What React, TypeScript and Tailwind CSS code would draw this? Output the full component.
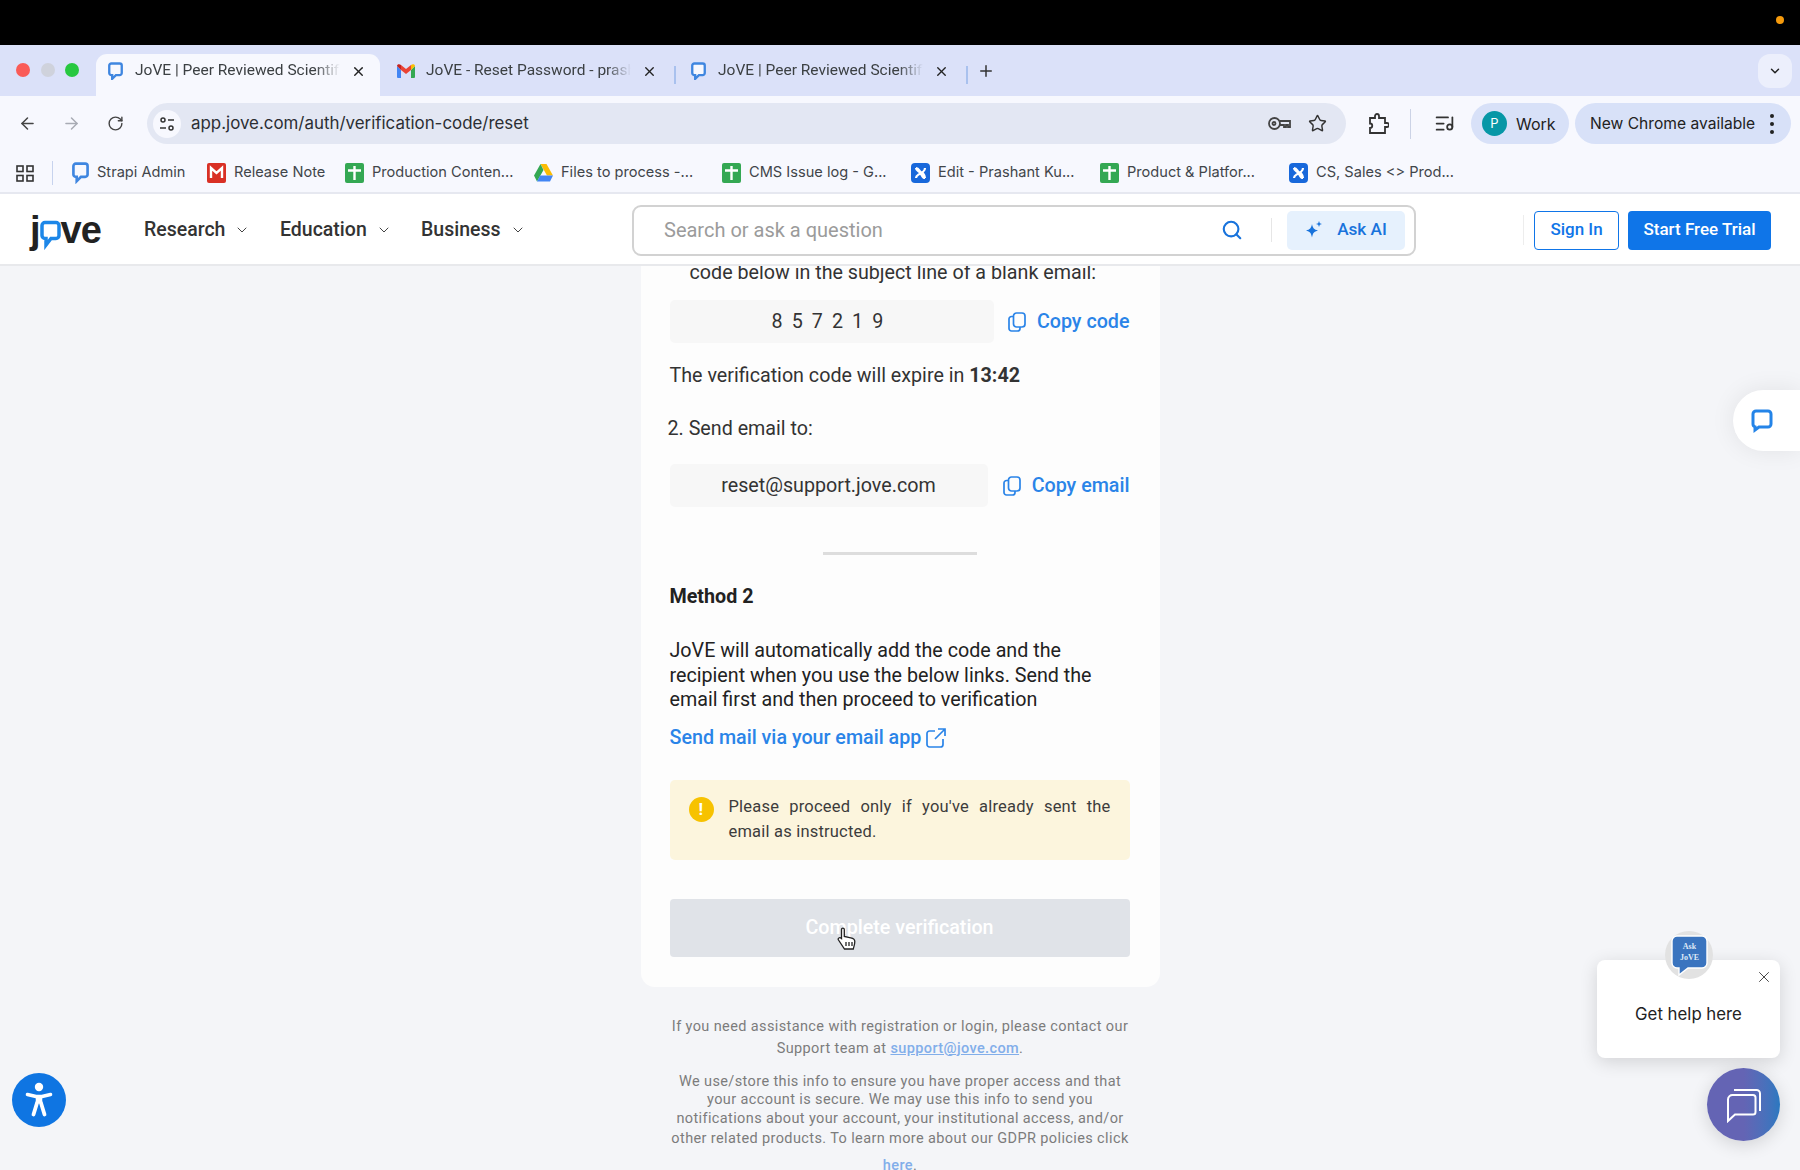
import React from "react";
import { ArrowLeft, ArrowRight, RotateCw, Star, X, Plus, ChevronDown, Search, ListMusic } from "lucide-react";

function JoveFav({ size = 18 }: { size?: number }) {
  return (
    <svg width={size} height={size * 1.25} viewBox="0 0 18 22" fill="none" className="shrink-0">
      <path d="M4 1.500h10a2.500 2.500 0 0 1 2.500 2.500v9a2.500 2.500 0 0 1-2.500 2.500H9.500L5 20v-4.500H4A2.500 2.500 0 0 1 1.500 13V4A2.500 2.500 0 0 1 4 1.500z" stroke="#3f86e0" strokeWidth="2.800" fill="#f7f8fe" />
    </svg>
  );
}
function GmailFav() {
  return (
    <svg width="18" height="14" viewBox="0 0 18 14" className="shrink-0">
      <path d="M0 2v11a1 1 0 0 0 1 1h3V6z" fill="#4285f4" />
      <path d="M18 2v11a1 1 0 0 1-1 1h-3V6z" fill="#34a853" />
      <path d="M4 6 9 10l5-4V1l-5 4-5-4z" fill="#ea4335" />
      <path d="M0 2c0-2 2.500-2.500 4-1v5z" fill="#c5221f" />
      <path d="M18 2c0-2-2.500-2.500-4-1v5z" fill="#fbbc04" />
    </svg>
  );
}
function RedFav() {
  return (
    <svg width="19" height="20" viewBox="0 0 19 20" className="shrink-0">
      <rect width="19" height="20" rx="2" fill="#d93025" />
      <path d="M4 15V5l5.500 5L15 5v10" stroke="#fff" strokeWidth="2.400" fill="none" />
    </svg>
  );
}
function SheetFav() {
  return (
    <svg width="19" height="20" viewBox="0 0 19 20" className="shrink-0">
      <rect width="19" height="20" rx="2" fill="#34a853" />
      <path d="M3 7.500h13M9.500 3v14" stroke="#fff" strokeWidth="2.400" />
    </svg>
  );
}
function DriveFav() {
  return (
    <svg width="19" height="18" viewBox="0 0 19 18" className="shrink-0">
      <path d="M6.500 0h6L19 11.500h-6z" fill="#fbbc04" />
      <path d="M6.500 0 0 11.500l3 6L9.500 6z" fill="#34a853" />
      <path d="M3 17.500h13l3-6H6.200z" fill="#4285f4" />
    </svg>
  );
}
function ConfFav() {
  return (
    <svg width="19" height="20" viewBox="0 0 19 20" className="shrink-0">
      <rect width="19" height="20" rx="4" fill="#1868db" />
      <path d="M5 5c3 0 3 3 4.500 4S14 8 14 5M5 15c0-3 3-3 4.500-5s4.500 2 4.500 5M5 5c0 3 3 3 4.500 5M14 15c-3 0-3-3-4.500-5" stroke="#fff" strokeWidth="2.200" fill="none" />
    </svg>
  );
}
function CopyIcon() {
  return (
    <svg width="18" height="20" viewBox="0 0 18 20" fill="none" stroke="#2a84e8" strokeWidth="1.700" className="shrink-0">
      <rect x="5.500" y="1" width="11.500" height="14" rx="3" />
      <path d="M5.500 4.500H3.500A2.500 2.500 0 0 0 1 7v9.500A2.500 2.500 0 0 0 3.500 19h6a2.500 2.500 0 0 0 2.500-2.500V15" />
    </svg>
  );
}
function Tab({ fav, title, active, width }: { fav: React.ReactNode; title: string; active?: boolean; width: string }) {
  return (
    <div className={`relative flex h-[42px] shrink-0 items-center pb-[8px] pl-[10px] ${width} ${active ? "rounded-t-[11px] bg-[#f7f8fe]" : ""}`}>
      <span className="flex w-[18px] shrink-0 justify-center">{fav}</span>
      <span className="ml-[11px] w-[205px] overflow-hidden whitespace-nowrap font-[Roboto,sans-serif] text-[15.500px] text-[#3c4043] [mask-image:linear-gradient(to_right,#000_88%,transparent)]">{title}</span>
      <X className="ml-[11px] shrink-0 text-[#222]" size={15} strokeWidth={2.200} />
    </div>
  );
}
function Bookmark({ fav, label, width }: { fav: React.ReactNode; label: string; width: string }) {
  return (
    <div className={`flex shrink-0 items-center gap-[8px] ${width}`}>
      {fav}
      <span className="whitespace-nowrap text-[14.600px] text-[#41454a]">{label}</span>
    </div>
  );
}
function Nav({ label, width }: { label: string; width: string }) {
  return (
    <div className={`flex shrink-0 items-center gap-[9px] ${width}`}>
      <span className="text-[19.500px] font-medium text-[#333]">{label}</span>
      <ChevronDown size={16} strokeWidth={1.500} className="text-[#444]" />
    </div>
  );
}

export default function App() {
  return (
    <div className="relative flex h-[1170px] w-[1800px] flex-col overflow-hidden bg-[#f4f5f8] font-[Roboto,sans-serif]">
      {/* OS bar */}
      <div className="flex h-[45px] shrink-0 items-center justify-end bg-black pr-[16px] pb-[5px]">
        <div className="h-[8px] w-[8px] rounded-full bg-[#f59a0c]" />
      </div>

      {/* Chrome */}
      <div className="shrink-0 font-[Inter,sans-serif]">
        <div className="flex h-[51px] items-end bg-[#dbe1f9] pl-[16px]">
          <div className="flex h-[42px] items-center gap-[10.500px] pb-[10px] pr-[17px]">
            <span className="h-[14px] w-[14px] rounded-full bg-[#fa5b57]" />
            <span className="h-[14px] w-[14px] rounded-full bg-[#cfd2dc]" />
            <span className="h-[14px] w-[14px] rounded-full bg-[#27c840]" />
          </div>
          <Tab active width="w-[284px] mr-[7px]" fav={<JoveFav size={15} />} title="JoVE | Peer Reviewed Scientific Video Journal" />
          <Tab width="w-[287px]" fav={<GmailFav />} title="JoVE - Reset Password - prashant" />
          <div className="mb-[12px] h-[18px] w-[2px] shrink-0 bg-[#a9c1ee]" />
          <Tab width="w-[287px] ml-[3px]" fav={<JoveFav size={15} />} title="JoVE | Peer Reviewed Scientific Video Journal" />
          <div className="mb-[12px] h-[18px] w-[2px] shrink-0 bg-[#a9c1ee]" />
          <Plus size={18} strokeWidth={2} className="mb-[16px] ml-[9px] text-[#333]" />
          <div className="ml-auto mr-[8px] mb-[8px] flex h-[34px] w-[34px] items-center justify-center rounded-[12px] bg-[#eceffc]">
            <ChevronDown size={14} strokeWidth={2.500} className="text-[#222]" />
          </div>
        </div>

        <div className="flex h-[55px] items-start bg-[#f7f8fe] pl-[18px] pr-[8px] pt-[7px]">
          <div className="flex h-[41px] items-center">
            <ArrowLeft size={19} strokeWidth={1.900} className="text-[#444]" />
            <ArrowRight size={19} strokeWidth={1.900} className="ml-[25px] text-[#a8abb4]" />
            <RotateCw size={17} strokeWidth={2} className="ml-[26px] text-[#444]" />
            <div className="ml-[23px] flex h-[41px] w-[1199px] items-center rounded-full bg-[#e3e7f3] pl-[6px] pr-[19px]">
              <div className="flex h-[28px] w-[28px] items-center justify-center rounded-full bg-[#f7f8fe]">
                <svg width="16" height="16" viewBox="0 0 16 16" fill="none" stroke="#333" strokeWidth="1.500">
                  <circle cx="4" cy="4" r="2" /><path d="M9 4h6M1 12h6" /><circle cx="12" cy="12" r="2" />
                </svg>
              </div>
              <span className="ml-[10px] pt-[1px] text-[16.900px] text-[#2b2e33]">app.jove.com/auth/verification-code/reset</span>
              <svg width="23" height="15" viewBox="0 0 23 15" fill="none" stroke="#444" strokeWidth="1.800" className="ml-auto">
                <circle cx="6.500" cy="7.500" r="5.500" /><circle cx="6" cy="7.500" r="1.500" /><path d="M12 5h10v6h-2V9h-2v2h-2V9h-4" />
              </svg>
              <Star size={19} strokeWidth={1.800} className="ml-[17px] text-[#333]" />
            </div>
            <svg width="21" height="22" viewBox="0 0 21 22" fill="none" stroke="#333" strokeWidth="1.800" className="ml-[22px]">
              <path d="M2 5h5V3a2 2 0 0 1 4 0v2h6v5h2a2 2 0 0 1 0 4h-2v6H2v-5c3 0 3-4.500 0-4.500z" />
            </svg>
            <div className="ml-[21px] h-[30px] w-[1px] bg-[#ccd3e6]" />
            <ListMusic size={21} strokeWidth={2} className="ml-[23px] text-[#333]" />
            <div className="ml-[16px] flex h-[41px] w-[98px] items-center rounded-full bg-[#d8e1f8] pl-[11px]">
              <span className="flex h-[25px] w-[25px] items-center justify-center rounded-full bg-[#0797a6] text-[13px] text-white">P</span>
              <span className="ml-[9px] text-[16px] text-[#222]">Work</span>
            </div>
            <div className="ml-[6px] flex h-[41px] w-[216px] items-center rounded-full bg-[#d8e1f8] pl-[15px]">
              <span className="text-[15.600px] text-[#222]">New Chrome available</span>
              <span className="ml-[15px] flex flex-col gap-[4px]">
                <span className="h-[4px] w-[4px] rounded-full bg-[#222]" />
                <span className="h-[4px] w-[4px] rounded-full bg-[#222]" />
                <span className="h-[4px] w-[4px] rounded-full bg-[#222]" />
              </span>
            </div>
          </div>
        </div>

        <div className="flex h-[43px] items-center border-b-2 border-[#e6e8f0] bg-[#f7f8fe] pl-[16px] pt-[3px]">
          <svg width="18" height="17" viewBox="0 0 18 17" fill="none" stroke="#333" strokeWidth="1.600" className="shrink-0">
            <rect x="1" y="1" width="6" height="5.500" /><rect x="11" y="1" width="6" height="5.500" /><rect x="1" y="10.500" width="6" height="5.500" /><rect x="11" y="10.500" width="6" height="5.500" />
          </svg>
          <div className="ml-[18px] mr-[19px] h-[24px] w-[1px] shrink-0 bg-[#c7d3ee]" />
          <Bookmark width="w-[135px]" fav={<JoveFav size={17} />} label="Strapi Admin" />
          <Bookmark width="w-[138px]" fav={<RedFav />} label="Release Note" />
          <Bookmark width="w-[189px]" fav={<SheetFav />} label="Production Conten..." />
          <Bookmark width="w-[188px]" fav={<DriveFav />} label="Files to process -..." />
          <Bookmark width="w-[189px]" fav={<SheetFav />} label="CMS Issue log - G..." />
          <Bookmark width="w-[189px]" fav={<ConfFav />} label="Edit - Prashant Ku..." />
          <Bookmark width="w-[189px]" fav={<SheetFav />} label="Product & Platfor..." />
          <Bookmark width="w-[180px]" fav={<ConfFav />} label="CS, Sales <> Prod..." />
        </div>
      </div>

      {/* Site header */}
      <header className="relative z-10 flex h-[72px] shrink-0 items-center border-b-2 border-[#e8e9ec] bg-white pl-[30px] pt-[2px]">
        <div className="flex w-[114px] shrink-0 items-center font-['Liberation_Sans',sans-serif] text-[38px] leading-none font-bold tracking-[-1px] text-[#222]">
          <span className="mt-[-1px]">j</span>
          <svg width="21" height="30" viewBox="0 0 21 30" fill="none" className="mt-[10px]">
            <path d="M5 2.500h11a3 3 0 0 1 3 3v10a3 3 0 0 1-3 3h-5L6 25v-6.500H5a3 3 0 0 1-3-3v-10a3 3 0 0 1 3-3z" stroke="#1d87e8" strokeWidth="3.500" />
          </svg>
          <span>ve</span>
        </div>
        <Nav width="w-[136px]" label="Research" />
        <Nav width="w-[141px]" label="Education" />
        <Nav width="w-[211px]" label="Business" />
        <div className="flex h-[51px] w-[784px] shrink-0 items-center rounded-[9px] border-2 border-[#d2d2d2] pl-[30px] pr-[9px]">
          <span className="text-[20px] text-[#9b9b9b]">Search or ask a question</span>
          <Search size={22} strokeWidth={2.300} className="ml-auto text-[#1873dc]" />
          <div className="ml-[28px] mr-[15px] h-[24px] w-[1px] bg-[#e6e6e6]" />
          <div className="flex h-[39px] w-[118px] items-center justify-center gap-[14px] rounded-[5px] bg-[#e6f1fd] text-[17.200px] font-medium text-[#1873dc]">
            <svg width="18" height="20" viewBox="0 0 18 20" fill="#1873dc">
              <path d="M7 4c.800 4 2 5.500 6 6.500-4 1-5.200 2.500-6 7-.800-4.500-2-6-6-7 4-1 5.200-2.500 6-6.500zM14 1l.800 2.200L17 4l-2.200.800L14 7l-.800-2.200L11 4l2.200-.800z" />
            </svg>
            Ask AI
          </div>
        </div>
        <div className="ml-[107px] mr-[10px] h-[30px] w-[1px] bg-[#ededed]" />
        <button className="flex h-[39px] w-[85px] items-center justify-center rounded-[4px] border border-[#0f75e8] text-[17px] font-medium text-[#0f75e8]">Sign In</button>
        <button className="ml-[9px] flex h-[39px] w-[143px] items-center justify-center rounded-[4px] bg-[#0f75e8] text-[17px] font-medium text-white">Start Free Trial</button>
      </header>

      {/* Body */}
      <main className="mt-[-6px] flex flex-col items-center">
        <section className="w-[519px] rounded-b-[14px] bg-[#fdfdfd] pl-[29px] pr-[30px] pb-[30px] text-[19.700px] text-[#333]">
          <p className="mt-[1px] h-[24px] whitespace-nowrap pl-[20px] leading-[24px]">code below in the subject line of a blank email:</p>
          <div className="mt-[15px] flex items-center">
            <div className="flex h-[43px] w-[324px] items-center justify-center rounded-[5px] bg-[#f7f7f7] pl-[1px] tracking-[0.460em]">857219</div>
            <span className="ml-auto"><CopyIcon /></span>
            <span className="ml-[11px] font-medium text-[#2a84e8]">Copy code</span>
          </div>
          <p className="mt-[21px] leading-[24px]">The verification code will expire in <b className="font-bold">13:42</b></p>
          <p className="mt-[29px] ml-[-2px] leading-[24px]">2. Send email to:</p>
          <div className="mt-[23px] flex items-center">
            <div className="flex h-[43px] w-[318px] items-center justify-center rounded-[5px] bg-[#f7f7f7]">reset@support.jove.com</div>
            <span className="ml-auto"><CopyIcon /></span>
            <span className="ml-[11px] font-medium text-[#2a84e8]">Copy email</span>
          </div>
          <div className="mx-auto mt-[45px] h-[3px] w-[154px] bg-[#dddddd]" />
          <p className="mt-[30px] font-bold leading-[24px] text-[#222]">Method 2</p>
          <p className="mt-[30px] leading-[24.500px] text-[#222]">JoVE will automatically add the code and the recipient when you use the below links. Send the email first and then proceed to verification</p>
          <div className="mt-[13px] flex items-center gap-[5px] font-medium leading-[24px] text-[#2a84e8]">
            Send mail via your email app
            <svg width="20" height="20" viewBox="0 0 20 20" fill="none" stroke="#2a84e8" strokeWidth="1.700">
              <path d="M9 3H3.500A2.500 2.500 0 0 0 1 5.500v11A2.500 2.500 0 0 0 3.500 19h11a2.500 2.500 0 0 0 2.500-2.500V11M12 1h7v7M19 1 9 11" />
            </svg>
          </div>
          <div className="mt-[30px] flex h-[80px] rounded-[5px] bg-[#fcf5dd] pl-[19px] pr-[19px] pt-[14px] text-[16.500px] tracking-[0.2px] text-[#3c3c3c]">
            <span className="mt-[3px] flex h-[25px] w-[25px] shrink-0 items-center justify-center rounded-full bg-[#f7c200] text-[17px] font-bold leading-none text-white">!</span>
            <p className="ml-[15px] text-justify leading-[25.500px]">Please proceed only if you've already sent the email as instructed.</p>
          </div>
          <div className="relative mt-[39px] flex h-[58px] items-center justify-center rounded-[4px] bg-[#e0e3e8] font-medium text-white">
            Complete verification
            <svg width="20" height="24" viewBox="0 0 20 24" className="absolute left-[167px] top-[28px]" fill="#fff" stroke="#222" strokeWidth="1.300">
              <path d="M4.500 2.500c0-1.800 2.800-1.800 2.800 0v7l6.500 1.300c2.500.500 4 1.500 4 3.700 0 3-1 5-1.500 7.500H7.500L1.500 13c-1-1.800 1-3.200 3-1.500z" />
              <path d="M9 15v4M12 15v4M15 15v4" />
            </svg>
          </div>
        </section>

        <div className="w-[470px] pt-[29px] text-center text-[14.500px] tracking-[0.385px] text-[#7c7c7c]">
          <p className="leading-[22px]">If you need assistance with registration or login, please contact our Support team at <a className="font-medium text-[#82aeea] underline">support@jove.com</a>.</p>
          <p className="mt-[13px] leading-[18.500px]">
            We use/store this info to ensure you have proper access and that your account is secure. We may use this info to send you notifications about your account, your institutional access, and/or
            <span className="mt-[2px] block">other related products. To learn more about our GDPR policies click</span>
          </p>
          <p className="mt-[7px] leading-[20px]"><a className="font-medium text-[#82aeea]">here</a>.</p>
        </div>
      </main>

      {/* Floating */}
      <div className="absolute right-0 top-[390px] flex h-[61px] w-[67px] items-center rounded-l-full bg-white pl-[18px] shadow-[0_0_24px_rgba(0,0,0,0.08)]">
        <svg width="22" height="24" viewBox="0 0 22 24" fill="none">
          <path d="M5 2h12a3 3 0 0 1 3 3v10a3 3 0 0 1-3 3H8l-4 3v-3.200A3 3 0 0 1 2 15V5a3 3 0 0 1 3-3z" stroke="#2484e8" strokeWidth="3" />
        </svg>
      </div>

      <div className="absolute left-[12px] top-[1073px] flex h-[54px] w-[54px] items-center justify-center rounded-full bg-[#0f75e2]">
        <svg width="28" height="36" viewBox="0 0 28 36" fill="none" stroke="#fff" strokeLinecap="round" strokeLinejoin="round">
          <circle cx="14" cy="5" r="4.200" fill="#fff" stroke="none" />
          <path d="M2.500 12.500 11 14.500h6l8.500-2" strokeWidth="3.600" />
          <path d="M14 14.500v7" strokeWidth="6.500" strokeLinecap="butt" />
          <path d="M12 21 8.500 32.500M16 21l3.500 11.500" strokeWidth="3.800" />
        </svg>
      </div>

      <div className="absolute left-[1597px] top-[960px] flex h-[98px] w-[183px] items-center justify-center rounded-[8px] bg-white pt-[12px] font-[Inter,sans-serif] text-[16.800px] text-[#222] shadow-[0_4px_18px_rgba(0,0,0,0.14)]">
        Get help here
        <X size={18} strokeWidth={1.100} className="absolute right-[7px] top-[8px] text-[#222]" />
      </div>
      <div className="absolute left-[1665px] top-[931px] flex h-[48px] w-[48px] items-center justify-center rounded-full bg-[#e2e2e2]">
        <svg width="40" height="44" viewBox="0 0 40 44">
          <path d="M8 3h25a5 5 0 0 1 5 5v22a5 5 0 0 1-5 5H19l-9 7 0-7H8a5 5 0 0 1-5-5V8a5 5 0 0 1 5-5z" fill="#3a74bf" stroke="#fff" strokeWidth="1.400" />
          <text x="20.500" y="16" textAnchor="middle" fontSize="8" fontWeight="700" fill="#dfe9f7" fontFamily="Liberation Serif, serif">Ask</text>
          <text x="20.500" y="27" textAnchor="middle" fontSize="8" fontWeight="700" fill="#dfe9f7" fontFamily="Liberation Serif, serif">JoVE</text>
        </svg>
      </div>
      <div className="absolute left-[1707px] top-[1068px] flex h-[73px] w-[73px] items-center justify-center rounded-full bg-gradient-to-r from-[#6464b4] from-50% to-[#2a78c0] shadow-[0_4px_18px_rgba(0,0,0,0.14)]">
        <svg width="36" height="36" viewBox="0 0 36 36" fill="none" stroke="#fff" strokeWidth="2">
          <path d="M7 8h20a2.500 2.500 0 0 1 2.500 2.500V25a2.500 2.500 0 0 1-2.500 2.500H9L2 34V12.500A4.500 4.500 0 0 1 7 8z" />
          <path d="M8 3h22.500A3.500 3.500 0 0 1 34 6.500V24" />
        </svg>
      </div>
    </div>
  );
}
